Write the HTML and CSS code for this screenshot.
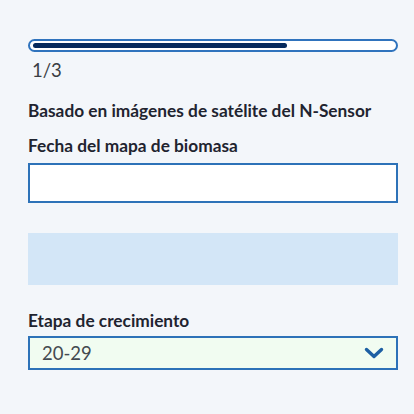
FILE: index.html
```html
<!DOCTYPE html>
<html lang="es">
<head>
<meta charset="utf-8">
<link rel="stylesheet" href="styles.css">
</head>
<body>
<div class="page">
  <div class="progress"><div class="progress-fill" style="width: 70.5%"></div></div>
  <div class="step">1/3</div>
  <div class="heading">Basado en imágenes de satélite del N-Sensor</div>
  <label class="label">Fecha del mapa de biomasa</label>
  <div class="input"></div>
  <div class="info"></div>
  <label class="label label-growth">Etapa de crecimiento</label>
  <div class="select">
    <span class="select-value">20-29</span>
    <svg class="chevron" width="20" height="12" viewBox="0 0 20 12"><path d="M2.5 2.5 L10 9.5 L17.5 2.5" fill="none" stroke="#1d5fa3" stroke-width="3.4" stroke-linecap="round" stroke-linejoin="round"/></svg>
  </div>
</div>
</body>
</html>
```
FILE: styles.css
```css
html, body {
  margin: 0;
  padding: 0;
  background: #f3f6fa;
}
body {
  font-family: Lato, "Liberation Sans", sans-serif;
  color: #1f2430;
}
.page {
  padding: 39px 16px 0 28px;
  display: flex;
  flex-direction: column;
}
.progress {
  height: 13px;
  box-sizing: border-box;
  border: 2px solid #2f73bd;
  border-radius: 7px;
  background: #ffffff;
  padding: 2px 3px;
  display: flex;
  align-items: center;
}
.progress-fill {
  height: 5px;
  border-radius: 3px;
  background: #06295c;
}
.step {
  margin-top: 7px;
  font-size: 18.5px;
  color: #3a3d44;
  padding-left: 4px;
  line-height: 22px;
}
.heading {
  margin-top: 19px;
  font-size: 17.3px;
  font-weight: 700;
  line-height: 22px;
}
.label {
  display: block;
  margin-top: 13px;
  font-size: 17.3px;
  font-weight: 700;
  line-height: 22px;
}
.input {
  margin-top: 6px;
  height: 40px;
  box-sizing: border-box;
  border: 2px solid #2d72b8;
  background: #ffffff;
}
.info {
  margin-top: 30px;
  height: 52px;
  background: #d3e6f7;
}
.label-growth {
  margin-top: 25px;
}
.select {
  margin-top: 4px;
  height: 34px;
  box-sizing: border-box;
  border: 2px solid #2d72b8;
  background: #f1fcf1;
  display: flex;
  align-items: center;
  justify-content: space-between;
  padding: 0 12px 0 12px;
}
.select-value {
  font-size: 18.5px;
  color: #444a50;
}
.chevron {
  display: block;
}
```
